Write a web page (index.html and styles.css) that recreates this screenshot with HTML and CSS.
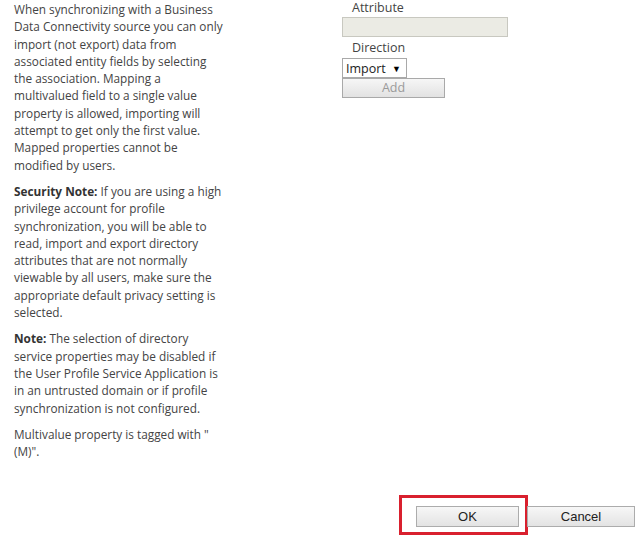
FILE: index.html
```html
<!DOCTYPE html>
<html>
<head>
<meta charset="utf-8">
<link rel="stylesheet" href="styles.css">
</head>
<body>
<div class="page">
  <div class="content">
    <div class="help">
      <p>When synchronizing with a Business<br>Data Connectivity source you can only<br>import (not export) data from<br>associated entity fields by selecting<br>the association. Mapping a<br>multivalued field to a single value<br>property is allowed, importing will<br>attempt to get only the first value.<br>Mapped properties cannot be<br>modified by users.</p>
      <p><b>Security Note:</b> If you are using a high<br>privilege account for profile<br>synchronization, you will be able to<br>read, import and export directory<br>attributes that are not normally<br>viewable by all users, make sure the<br>appropriate default privacy setting is<br>selected.</p>
      <p><b>Note:</b> The selection of directory<br>service properties may be disabled if<br>the User Profile Service Application is<br>in an untrusted domain or if profile<br>synchronization is not configured.</p>
      <p>Multivalue property is tagged with "<br>(M)".</p>
    </div>
    <div class="form">
      <div class="label label-first">Attribute</div>
      <div class="field-disabled"></div>
      <div class="label">Direction</div>
      <div class="select"><span>Import</span><span class="arrow">&#9660;</span></div>
      <div class="btn-add">Add</div>
    </div>
  </div>
  <div class="footer">
    <div class="btn ok-wrap">OK<span class="highlight"></span></div>
    <div class="btn">Cancel</div>
  </div>
</div>
</body>
</html>
```
FILE: styles.css
```css
html, body {
  margin: 0;
  padding: 0;
  background: #ffffff;
}
.page {
  height: 549px;
  display: flex;
  flex-direction: column;
  box-sizing: border-box;
}
.content {
  display: flex;
  flex-direction: row;
}
.help {
  width: 218px;
  padding-left: 14px;
  padding-top: 1px;
  font-family: "Open Sans", "Noto Sans", sans-serif;
  font-size: 11.8px;
  line-height: 17.3px;
  color: #444444;
  white-space: nowrap;
}
.help p {
  margin: 0 0 9px 0;
}
.help b {
  font-weight: 700;
  color: #333;
}
.form {
  margin-left: 110px;
  display: flex;
  flex-direction: column;
  align-items: flex-start;
  font-family: "Open Sans", "Noto Sans", sans-serif;
  font-size: 12.5px;
  color: #444444;
}
.label {
  padding-left: 10px;
  line-height: 15px;
  margin-top: 3px;
}
.label-first {
  margin-top: 0;
}
.field-disabled {
  margin-top: 2px;
  width: 164px;
  height: 18px;
  background: #ebebe4;
  border: 1px solid #c8c8c0;
}
.select {
  margin-top: 3px;
  width: 55px;
  height: 18px;
  border: 1px solid #a9a9a9;
  background: #fff;
  display: flex;
  align-items: center;
  justify-content: space-between;
  padding: 0 5px 0 3px;
  box-sizing: content-box;
  color: #222;
  font-size: 12.5px;
}
.select .arrow {
  font-size: 9px;
  color: #000;
}
.btn-add {
  width: 101px;
  height: 18px;
  border: 1px solid #a9a9a9;
  background: linear-gradient(#f6f6f6, #e2e2e2);
  color: #9a9a9a;
  text-align: center;
  line-height: 18px;
  font-size: 12.5px;
}
.footer {
  margin-top: auto;
  display: flex;
  justify-content: flex-end;
  gap: 8px;
  padding: 0 5px 22px 0;
}
.btn {
  position: relative;
  height: 19px;
  line-height: 19px;
  border: 1px solid #acacac;
  background: linear-gradient(#f7f7f7, #e3e3e3);
  font-family: "Liberation Sans", Arial, sans-serif;
  font-size: 13px;
  color: #222;
  text-align: center;
  width: 106px;
}
.ok-wrap {
  width: 101px;
}
.highlight {
  position: absolute;
  left: -18px;
  top: -12px;
  right: -10px;
  bottom: -9px;
  border: 3px solid #d9202e;
  pointer-events: none;
}
```
